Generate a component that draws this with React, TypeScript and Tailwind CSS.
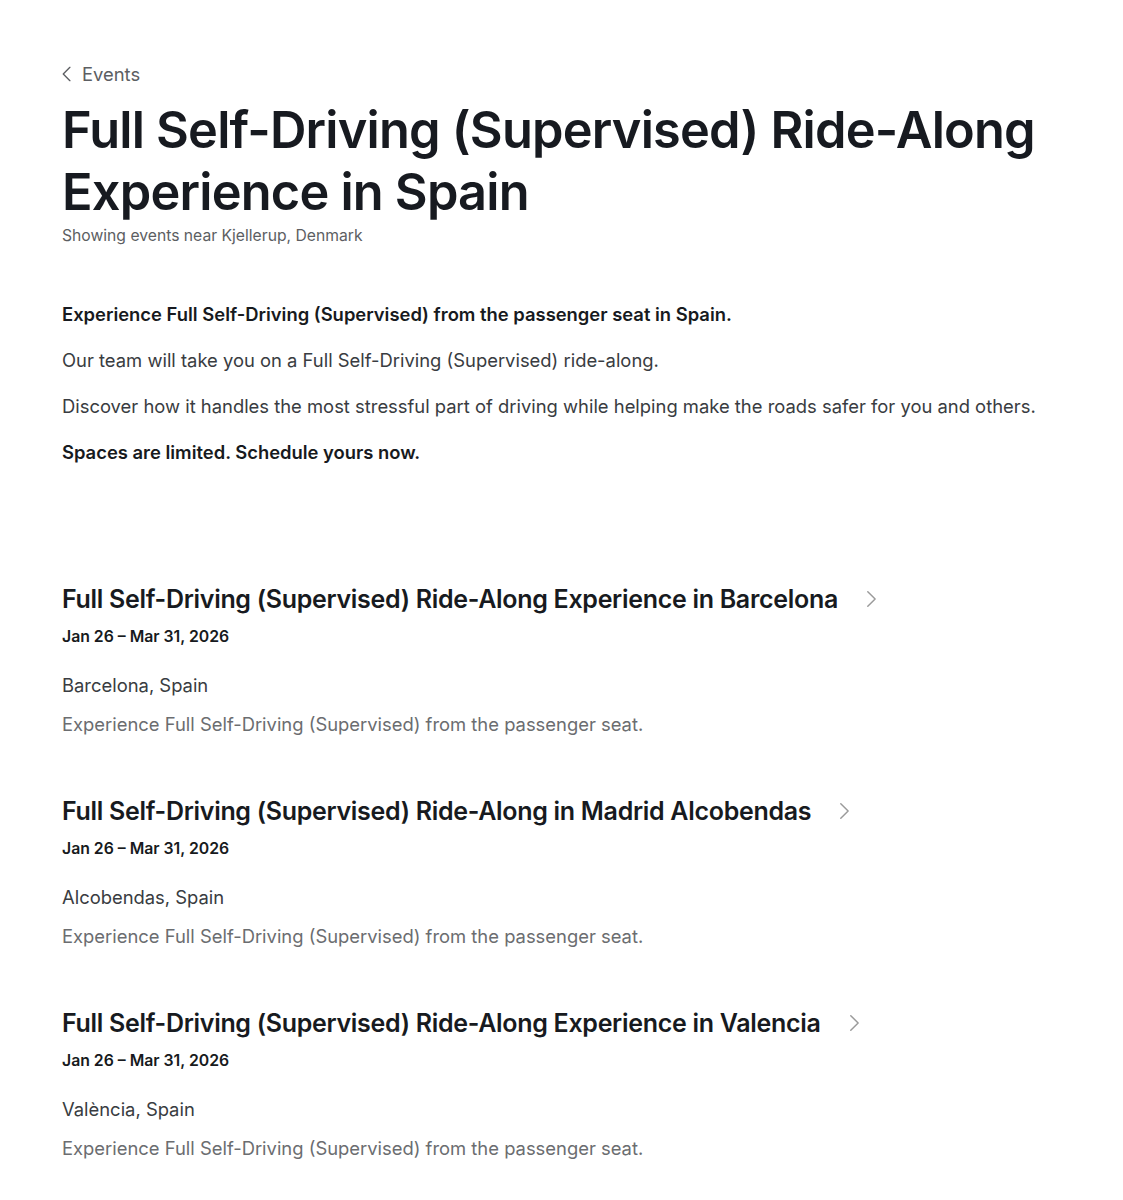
import React from 'react';

interface EventItem {
  title: string;
  dates: string;
  place: string;
  blurb: string;
}

const events: EventItem[] = [
  {
    title: 'Full Self-Driving (Supervised) Ride-Along Experience in Barcelona',
    dates: 'Jan 26 – Mar 31, 2026',
    place: 'Barcelona, Spain',
    blurb: 'Experience Full Self-Driving (Supervised) from the passenger seat.',
  },
  {
    title: 'Full Self-Driving (Supervised) Ride-Along in Madrid Alcobendas',
    dates: 'Jan 26 – Mar 31, 2026',
    place: 'Alcobendas, Spain',
    blurb: 'Experience Full Self-Driving (Supervised) from the passenger seat.',
  },
  {
    title: 'Full Self-Driving (Supervised) Ride-Along Experience in Valencia',
    dates: 'Jan 26 – Mar 31, 2026',
    place: 'València, Spain',
    blurb: 'Experience Full Self-Driving (Supervised) from the passenger seat.',
  },
];

function Chevron({ dir = 'right', className = '' }: { dir?: 'left' | 'right'; className?: string }) {
  return (
    <svg className={className} viewBox="0 0 24 24" fill="none" stroke="currentColor" strokeWidth="1.6" strokeLinecap="round" strokeLinejoin="round">
      {dir === 'right' ? <path d="M8.5 4l8 8-8 8" /> : <path d="M15.5 4l-8 8 8 8" />}
    </svg>
  );
}

function EventRow({ ev }: { ev: EventItem }) {
  return (
    <div className="flex flex-col">
      <a href="#" className="flex items-center gap-[22px] text-[#171a20]">
        <h2 className="text-[25px] leading-[32px] font-semibold tracking-[-0.3px]">{ev.title}</h2>
        <Chevron className="w-[22px] h-[22px] text-[#9a9a9a]" />
      </a>
      <div className="mt-[12px] text-[15.8px] leading-[20px] font-semibold text-[#171a20]">{ev.dates}</div>
      <div className="mt-[26px] text-[18.4px] leading-[24px] text-[#393c41]">{ev.place}</div>
      <div className="mt-[15px] text-[18.4px] leading-[24px] text-[#6b6d70]">{ev.blurb}</div>
    </div>
  );
}

export default function App() {
  return (
    <div className="min-h-[1200px] bg-white" style={{ fontFamily: 'Inter, "Noto Sans", sans-serif' }}>
      <div className="pl-[62px] pr-8 pt-[62px]">
        <a href="#" className="inline-flex items-center gap-[5px] text-[18.4px] leading-[24px] text-[#5c5e62]">
          <Chevron dir="left" className="w-[20px] h-[20px] -ml-[5px] text-[#5c5e62]" />
          Events
        </a>

        <h1 className="mt-[9px] text-[50.5px] leading-[62px] font-semibold tracking-[-0.8px] text-[#171a20]">
          Full Self-Driving (Supervised) Ride-Along
          <br />
          Experience in Spain
        </h1>
        <p className="mt-[3px] text-[15.7px] leading-[20px] text-[#5c5e62]">Showing events near Kjellerup, Denmark</p>

        <div className="mt-[56px] flex flex-col gap-[22px] text-[18.4px] leading-[24px] text-[#393c41]">
          <p className="font-semibold text-[#171a20]">Experience Full Self-Driving (Supervised) from the passenger seat in Spain.</p>
          <p>Our team will take you on a Full Self-Driving (Supervised) ride-along.</p>
          <p>Discover how it handles the most stressful part of driving while helping make the roads safer for you and others.</p>
          <p className="font-semibold text-[#171a20]">Spaces are limited. Schedule yours now.</p>
        </div>

        <div className="mt-[119px] flex flex-col gap-[59px]">
          {events.map((ev) => (
            <EventRow key={ev.title} ev={ev} />
          ))}
        </div>
      </div>
    </div>
  );
}
